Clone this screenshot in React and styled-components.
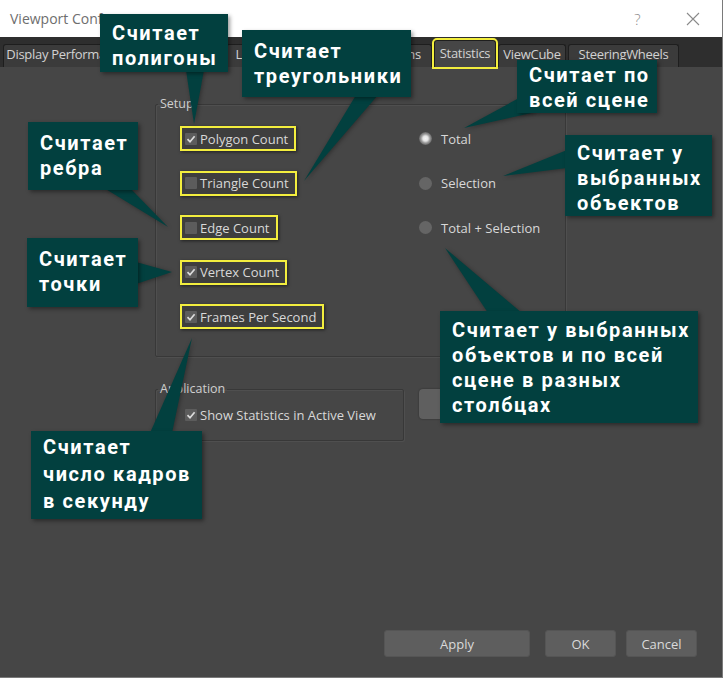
import React from "react"
import styled, { createGlobalStyle } from "styled-components"

const GlobalStyle = createGlobalStyle`
  html, body {
    margin: 0;
    padding: 0;
    background: #ffffff;
  }
  body {
    font-family: "Open Sans", "Liberation Sans", sans-serif;
  }
  * {
    box-sizing: border-box;
  }
`

const TEAL = "#02403f"
const YELLOW = "#f3ee3e"

const tabs = [
  { id: "Display Performance", w: 127 },
  { id: "Background", w: 92 },
  { id: "Layout", w: 58 },
  { id: "Safe Frames", w: 76 },
  { id: "Regions", w: 68 },
  { id: "Statistics", w: 62, active: true },
  { id: "ViewCube", w: 68 },
  { id: "SteeringWheels", w: 111 },
]

const counts = [
  { id: "Polygon Count", checked: true },
  { id: "Triangle Count", checked: false },
  { id: "Edge Count", checked: false },
  { id: "Vertex Count", checked: true },
  { id: "Frames Per Second", checked: true },
]

const modes = [
  { id: "Total", on: true },
  { id: "Selection", on: false },
  { id: "Total + Selection", on: false },
]

const callouts = [
  { text: "Считает\nполигоны", x: 100, y: 14, w: 128, h: 58, pt: 7, tail: "186,70 204,70 194,124" },
  { text: "Считает\nтреугольники", x: 242, y: 30, w: 169, h: 67, pt: 9, tail: "356,95 378,95 304,181" },
  { text: "Считает по\nвсей сцене", x: 517, y: 60, w: 140, h: 53, pt: 3, tail: "519,98 536,112 464,128" },
  { text: "Считает у\nвыбранных\nобъектов", x: 565, y: 135, w: 147, h: 81, pt: 6, tail: "567,150 567,168 503,176" },
  { text: "Считает\nребра", x: 28, y: 122, w: 110, h: 68, pt: 9, tail: "104,188 130,188 168,227" },
  { text: "Считает\nточки", x: 27, y: 238, w: 111, h: 69, pt: 9, tail: "136,262 136,284 172,272" },
  { text: "Считает\nчисло кадров\nв секунду", x: 31, y: 431, w: 171, h: 88, pt: 3, lh: 27, tail: "150,433 172,433 192,338" },
  { text: "Считает у выбранных\nобъектов и по всей\nсцене в разных\nстолбцах", x: 440, y: 311, w: 258, h: 112, pt: 7, tail: "488,313 522,313 445,248" },
]

const Window = styled.div`
  position: relative;
  width: 723px;
  height: 678px;
  display: flex;
  flex-direction: column;
  background: #464646;
  border-right: 1px solid #7a7a7a;
  border-bottom: 1px solid #7a7a7a;
  overflow: hidden;
`

const TitleBar = styled.div`
  height: 37px;
  flex: none;
  display: flex;
  align-items: center;
  padding-left: 10px;
  background: #ffffff;
  color: #6e6e6e;
  font-size: 14px;
`

const TitleControls = styled.div`
  margin-left: auto;
  display: flex;
  height: 100%;
  padding-right: 2px;
`

const TitleButton = styled.div`
  width: 55px;
  height: 100%;
  display: flex;
  align-items: center;
  justify-content: center;
  color: #8a8a8a;
  font-size: 15px;
  font-weight: 300;
`

const TabStrip = styled.div`
  height: 30px;
  flex: none;
  display: flex;
  align-items: flex-end;
  gap: 2px;
  padding-left: 3px;
  background: #2e2e2e;
`

const Tab = styled.div`
  width: ${({ $w }) => $w}px;
  height: ${({ $active }) => ($active ? 27 : 23)}px;
  display: flex;
  align-items: center;
  justify-content: center;
  padding-bottom: ${({ $active }) => ($active ? 3 : 4)}px;
  border: 1px solid #1e1e1e;
  border-bottom: none;
  border-radius: 3px 3px 0 0;
  background: ${({ $active }) => ($active ? "#464646" : "#3b3b3b")};
  color: #d2d2d2;
  font-size: 13px;
  letter-spacing: -0.3px;
  white-space: nowrap;
  overflow: hidden;
  outline: ${({ $active }) => ($active ? `2px solid ${YELLOW}` : "none")};
`

const Page = styled.div`
  flex: 1;
  display: flex;
  flex-direction: column;
`

const Groups = styled.div`
  display: flex;
  flex-direction: column;
  padding: 29px 0 0 155px;
`

const GroupBox = styled.fieldset`
  width: ${({ $w }) => $w}px;
  margin: 0;
  padding: 0;
  border: 1px solid #383838;
  border-radius: 2px;
  box-shadow: 1px 1px 0 #4f4f4f, inset 1px 1px 0 #4f4f4f;
`

const Legend = styled.legend`
  margin-left: 2px;
  padding: 0 2px;
  font-size: 12.5px;
  line-height: 16px;
  color: #cfcfcf;
`

const SetupBody = styled.div`
  display: flex;
  padding: 14px 0 27px 24px;
`

const Column = styled.div`
  width: ${({ $w }) => ($w ? `${$w}px` : "auto")};
  display: flex;
  flex-direction: column;
  align-items: flex-start;
  gap: 19.5px;
`

const CheckRow = styled.div`
  height: 25px;
  display: inline-flex;
  align-items: center;
  gap: 3px;
  padding: 0 6px 0 3px;
  border: 2px solid ${({ $mark }) => ($mark ? YELLOW : "transparent")};
  background: ${({ $mark }) => ($mark ? "#3e3e3e" : "transparent")};
  box-shadow: ${({ $mark }) => ($mark ? "1px 1px 3px rgba(0,0,0,0.55)" : "none")};
  color: #d8d8d8;
  font-size: 13px;
  white-space: nowrap;
`

const Box = styled.span`
  width: 12px;
  height: 12px;
  flex: none;
  display: flex;
  align-items: center;
  justify-content: center;
  background: #5c5c5c;
  border-radius: 1px;
`

const RadioRow = styled.div`
  height: 25px;
  display: flex;
  align-items: center;
  gap: 9px;
  color: #d8d8d8;
  font-size: 13px;
  white-space: nowrap;
`

const Dot = styled.span`
  width: 13px;
  height: 13px;
  flex: none;
  border-radius: 50%;
  background: ${({ $on }) =>
    $on
      ? "radial-gradient(circle, #f4f4f4 0, #e6e6e6 2.5px, #9a9a9a 4.5px, #666 6.5px)"
      : "#656565"};
`

const AppRow = styled.div`
  display: flex;
  align-items: flex-start;
  gap: 15px;
  margin-top: 24px;
`

const AppBody = styled.div`
  padding: 5px 0 13px 24px;
`

const SideButton = styled.div`
  width: 150px;
  height: 30px;
  margin-top: 8px;
  border-radius: 4px;
  background: #5f5f5f;
  box-shadow: 0 0 2px rgba(0, 0, 0, 0.4);
`

const Footer = styled.div`
  margin-top: auto;
  display: flex;
  justify-content: flex-end;
  gap: 10px;
  padding: 0 25px 20px 0;
`

const Button = styled.div`
  width: ${({ $w }) => $w}px;
  height: 27px;
  margin-right: ${({ $gap }) => $gap || 0}px;
  display: flex;
  align-items: center;
  justify-content: center;
  border: 1px solid #555;
  border-radius: 3px;
  background: #5e5e5e;
  color: #dadada;
  font-size: 13px;
`

const Tails = styled.svg`
  position: absolute;
  left: 0;
  top: 0;
  pointer-events: none;
  filter: drop-shadow(1px 1px 2px rgba(0, 0, 0, 0.35));
`

const Callout = styled.div`
  position: absolute;
  left: ${({ $x }) => $x}px;
  top: ${({ $y }) => $y}px;
  width: ${({ $w }) => $w}px;
  height: ${({ $h }) => $h}px;
  padding: ${({ $pt }) => $pt}px 6px 0 12px;
  background: ${TEAL};
  box-shadow: 2px 2px 4px rgba(0, 0, 0, 0.4);
  color: #ffffff;
  font-family: Roboto, "Noto Sans", sans-serif;
  font-weight: 700;
  font-size: 20px;
  line-height: ${({ $lh }) => $lh || 25}px;
  letter-spacing: 1.6px;
  white-space: pre;
`

const Check = () => (
  <svg width="10" height="10" viewBox="0 0 10 10">
    <path d="M1.5 5.2 L4 7.8 L8.6 2.2" fill="none" stroke="#dcdcdc" strokeWidth="1.7" />
  </svg>
)

const CheckItem = ({ label, checked, mark }) => (
  <CheckRow $mark={mark}>
    <Box>{checked && <Check />}</Box>
    {label}
  </CheckRow>
)

const App = () => (
  <>
    <GlobalStyle />
    <Window>
      <TitleBar>
        Viewport Configuration
        <TitleControls>
          <TitleButton>?</TitleButton>
          <TitleButton>
            <svg width="14" height="14" viewBox="0 0 14 14">
              <path d="M1 1 L13 13 M13 1 L1 13" stroke="#8a8a8a" strokeWidth="1.1" />
            </svg>
          </TitleButton>
        </TitleControls>
      </TitleBar>

      <TabStrip>
        {tabs.map(t => (
          <Tab key={t.id} $w={t.w} $active={t.active}>
            {t.id}
          </Tab>
        ))}
      </TabStrip>

      <Page>
        <Groups>
          <GroupBox $w={411}>
            <Legend>Setup</Legend>
            <SetupBody>
              <Column $w={239}>
                {counts.map(c => (
                  <CheckItem key={c.id} label={c.id} checked={c.checked} mark />
                ))}
              </Column>
              <Column>
                {modes.map(m => (
                  <RadioRow key={m.id}>
                    <Dot $on={m.on} />
                    {m.id}
                  </RadioRow>
                ))}
              </Column>
            </SetupBody>
          </GroupBox>

          <AppRow>
            <GroupBox $w={249}>
              <Legend>Application</Legend>
              <AppBody>
                <CheckItem label="Show Statistics in Active View" checked />
              </AppBody>
            </GroupBox>
            <SideButton />
          </AppRow>
        </Groups>

        <Footer>
          <Button $w={146} $gap={5}>Apply</Button>
          <Button $w={71}>OK</Button>
          <Button $w={71}>Cancel</Button>
        </Footer>
      </Page>

      <Tails width="723" height="678">
        {callouts.map(c => (
          <polygon key={c.text} points={c.tail} fill={TEAL} />
        ))}
      </Tails>

      {callouts.map(c => (
        <Callout key={c.text} $x={c.x} $y={c.y} $w={c.w} $h={c.h} $pt={c.pt} $lh={c.lh}>
          {c.text}
        </Callout>
      ))}
    </Window>
  </>
)

export default App
